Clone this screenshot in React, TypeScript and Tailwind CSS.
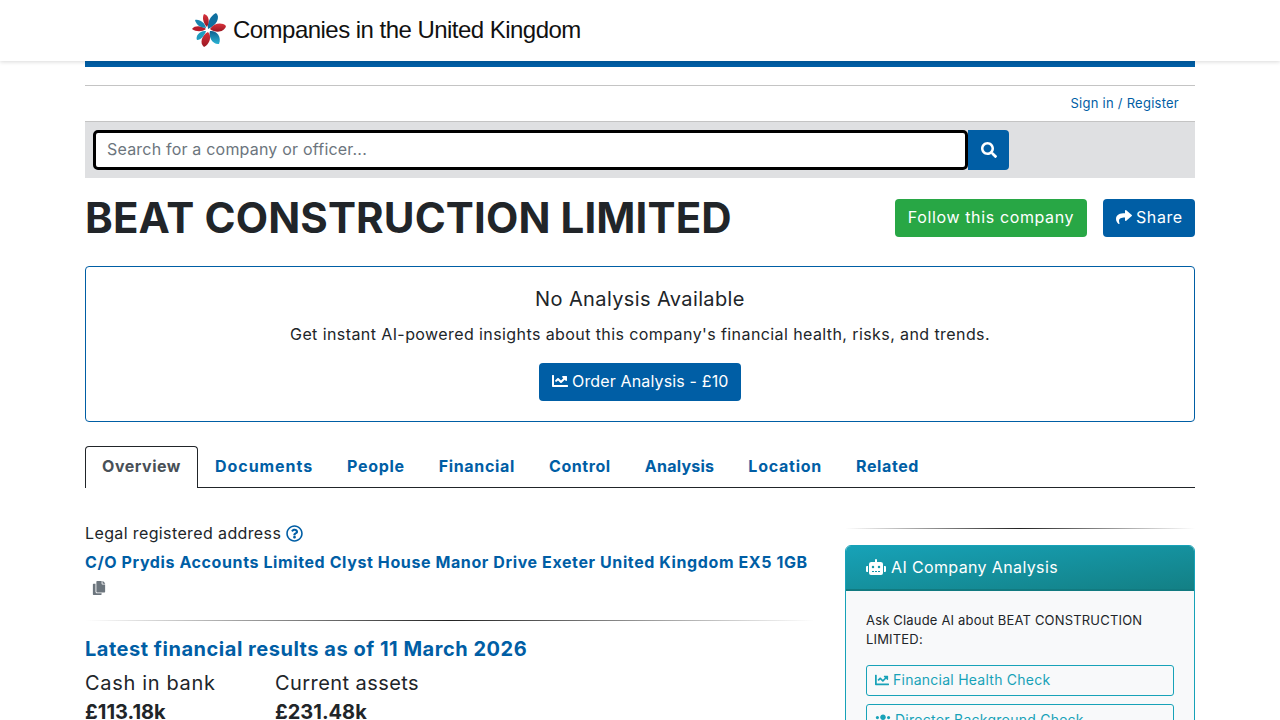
import { FaChartLine, FaCopy, FaRegQuestionCircle, FaRobot, FaSearch, FaShare, FaUsers } from "react-icons/fa";

const font = "font-['Inter','Liberation_Sans',sans-serif]";

function Logo() {
  return (
    <svg width="34" height="34" viewBox="0 0 34 34" className="shrink-0">
      <defs>
        <linearGradient id="red" x1="0" y1="0" x2="0" y2="1">
          <stop offset="0" stopColor="#d8323c" />
          <stop offset="1" stopColor="#9a1722" />
        </linearGradient>
        <linearGradient id="blue" x1="0" y1="0" x2="0" y2="1">
          <stop offset="0" stopColor="#0f5f8f" />
          <stop offset="1" stopColor="#2ab4d4" />
        </linearGradient>
      </defs>
      <path d="M16 16 C15 10 18 3 24 0 C29 4 24 13 16 16Z" fill="#0f6fa0" />
      <path d="M18 16 C22 10 30 9 34 13 C32 20 23 20 18 16Z" fill="url(#red)" />
      <path d="M18 18 C24 17 30 23 27 31 C21 32 16 24 18 18Z" fill="url(#blue)" />
      <path d="M16 19 C20 23 18 31 12 34 C7 30 10 22 16 19Z" fill="url(#red)" />
      <path d="M14 18 C13 22 9 27 5 27 C3 23 8 17 14 18Z" fill="#1f9cc0" />
      <path d="M14 16 C10 19 4 19 0 16 C3 12 10 13 14 16Z" fill="#b81c2a" />
      <path d="M14 15 C9 15 4 12 3 7 C8 6 13 10 14 15Z" fill="#1a86b0" />
      <path d="M15 14 C11 10 10 4 12 1 C17 2 18 9 15 14Z" fill="url(#red)" />
    </svg>
  );
}

function FadeRule({ className }: { className: string }) {
  return <div className={`h-px bg-gradient-to-r from-transparent via-[#222] to-transparent ${className}`} />;
}

const tabs = [
  { label: "Documents", cls: "tracking-[0.95px]" },
  { label: "People", cls: "tracking-[0.67px]" },
  { label: "Financial", cls: "tracking-[0.67px]" },
  { label: "Control", cls: "tracking-[0.57px]" },
  { label: "Analysis", cls: "tracking-[0.25px]" },
  { label: "Location", cls: "tracking-[0.75px]" },
  { label: "Related", cls: "tracking-[0.6px]" },
];

export default function App() {
  return (
    <div className={`h-[720px] overflow-hidden bg-white text-[#212529] ${font}`}>
      {/* top logo bar */}
      <header className="h-[61px] bg-white shadow-[0_1px_4px_rgba(0,0,0,0.15)] relative">
        <div className="flex items-center gap-[7px] pl-[192px] pt-[13px]">
          <Logo />
          <span className="font-['Liberation_Sans',sans-serif] text-[24px] leading-[34px] text-[#111] tracking-[-0.53px]">
            Companies in the United Kingdom
          </span>
        </div>
      </header>

      <div className="w-[1110px] mx-auto">
        <div className="h-[6px] bg-[#005ea5]" />
        <div className="mt-[18px] border-t border-[#c4c4c4] h-[36px] flex items-center justify-end pr-4">
          <a className="text-[13px] tracking-[0.25px] text-[#005ea5]">Sign in / Register</a>
        </div>

        {/* search */}
        <div className="h-[57px] bg-[#dfe0e2] border-t border-[#c4c4c4] flex items-start pt-2 pl-2">
          <div className="w-[875px] h-[40px] bg-white border-[3px] border-black rounded-[5px] flex items-center pl-[11px] pb-[2px] text-[16px] tracking-[0.2px] text-[#6c757d]">
            Search for a company or officer...
          </div>
          <button className="w-[41px] h-[40px] bg-[#005ea5] text-white rounded-r-[4px] flex items-center justify-center">
            <FaSearch size={16} />
          </button>
        </div>

        {/* company title */}
        <div className="flex items-center justify-between mt-[21px] h-[38px]">
          <h1 className="text-[42px] font-bold leading-[38px] tracking-[0.12px]">BEAT CONSTRUCTION LIMITED</h1>
          <div className="flex gap-4">
            <button className="h-[38px] w-[192px] rounded-[4px] bg-[#28a745] text-white text-[16px] tracking-[0.63px] pb-[2px]">Follow this company</button>
            <button className="h-[38px] w-[92px] pl-[13px] rounded-[4px] bg-[#005ea5] text-white text-[16px] tracking-[0.6px] flex items-center gap-1 pb-[2px]">
              <FaShare size={16} /> Share
            </button>
          </div>
        </div>

        {/* analysis box */}
        <div className="mt-[29px] h-[156px] border border-[#005ea5] rounded-[4px] flex flex-col items-center pt-[19px]">
          <div className="text-[20px] leading-[26px] tracking-[0.38px]">No Analysis Available</div>
          <p className="mt-[10px] text-[16px] leading-[24px] tracking-[0.41px]">Get instant AI-powered insights about this company's financial health, risks, and trends.</p>
          <button className="mt-[17px] h-[38px] w-[202px] pl-[13px] pb-[2px] rounded-[4px] bg-[#005ea5] text-white text-[16px] tracking-[0.15px] flex items-center gap-1">
            <FaChartLine size={16} /> Order Analysis - £10
          </button>
        </div>

        {/* tabs */}
        <div className="mt-6 h-[42px] border-b border-[#212529] flex items-stretch text-[16px] font-bold">
          <div className="h-[42px] w-[113px] border border-b-0 border-[#212529] rounded-t-[4px] bg-white text-[#495057] tracking-[0.5px] flex items-center justify-center pb-[3px]">
            Overview
          </div>
          {tabs.map((t) => (
            <a key={t.label} className={`px-[17px] pb-px flex items-center text-[#005ea5] ${t.cls}`}>{t.label}</a>
          ))}
        </div>

        <div className="grid grid-cols-[730px_350px] gap-[30px]">
          {/* main column */}
          <div>
            <div className="mt-[33px] flex items-center gap-[5px] text-[16px] leading-6 tracking-[0.38px]">
              Legal registered address <FaRegQuestionCircle size={17} className="text-[#005ea5]" />
            </div>
            <a className="block mt-[5px] text-[16px] leading-6 font-bold text-[#005ea5] tracking-[0.6px] whitespace-nowrap">
              C/O Prydis Accounts Limited Clyst House Manor Drive Exeter United Kingdom EX5 1GB
            </a>
            <div className="pl-[7px] h-[28px] pb-px flex items-center text-[#6c757d]">
              <FaCopy size={14} />
            </div>
            <FadeRule className="mt-[18px]" />
            <h2 className="mt-4 text-[20px] leading-6 font-bold text-[#005ea5] tracking-[0.52px]">Latest financial results as of 11 March 2026</h2>
            <div className="mt-[10px] flex gap-[60px] text-[20px] whitespace-nowrap">
              <div className="w-[130px]">
                <div className="leading-6 tracking-[0.66px]">Cash in bank</div>
                <div className="mt-[5px] font-bold leading-6">£113.18k</div>
              </div>
              <div>
                <div className="leading-6 tracking-[0.43px]">Current assets</div>
                <div className="mt-[5px] font-bold leading-6">£231.48k</div>
              </div>
            </div>
          </div>

          {/* AI sidebar */}
          <aside className="pt-10">
            <FadeRule className="" />
            <div className="mt-4 border border-[#17a2b8] rounded-[6px] overflow-hidden bg-[#f8f9fa] h-[400px]">
              <div className="h-[45px] bg-gradient-to-br from-[#17a2b8] to-[#138085] border-b-2 border-[#117a80] text-white flex items-center gap-[5px] pl-5 pb-[2px] text-[16px] tracking-[0.37px]">
                <FaRobot size={20} /> AI Company Analysis
              </div>
              <div className="px-5 pt-5">
                <p className="text-[13px] leading-[19px] tracking-[0.18px]">Ask Claude AI about BEAT CONSTRUCTION LIMITED:</p>
                <button className="mt-4 w-full h-[31px] border border-[#17a2b8] rounded-[3px] text-[#17a2b8] text-[14px] tracking-[0.25px] flex items-center gap-1 pl-2 pb-[2px]">
                  <FaChartLine size={14} /> Financial Health Check
                </button>
                <button className="mt-2 w-full h-[31px] border border-[#17a2b8] rounded-[3px] text-[#17a2b8] text-[14px] tracking-[0.25px] flex items-center gap-1 pl-2">
                  <FaUsers size={16} /> Director Background Check
                </button>
              </div>
            </div>
          </aside>
        </div>
      </div>
    </div>
  );
}
